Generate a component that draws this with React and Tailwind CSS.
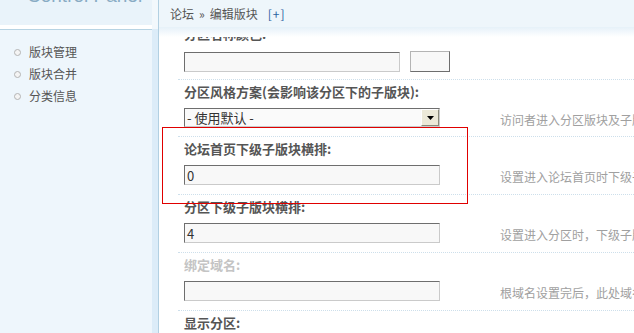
import React from "react";

const font = { fontFamily: '"Noto Sans CJK SC", "Noto Sans", sans-serif' };

function TextInput({ value = "", w = "w-[256px]" }) {
  return (
    <div
      className={`${w} shrink-0 h-[20px] border border-t-[#6e6e6e] border-l-[#6e6e6e] border-b-[#cacaca] border-r-[#cacaca] bg-[#f8f8f8] flex items-center pl-[2px] text-[13px] leading-none text-[#333]`}
    >
      {value}
    </div>
  );
}

function Row({ label, labelClass = "text-[#555]", children, desc }) {
  return (
    <div className="border-b border-dotted border-[#cddfeb] pl-[6px] pt-[4px] pb-[9px]">
      <div className={`h-[16px] leading-[16px] text-[13px] font-bold whitespace-nowrap ${labelClass}`}>{label}</div>
      <div className="mt-[8px] flex items-center">
        {children}
        {desc && (
          <div className="ml-[60px] shrink-0 whitespace-nowrap text-[12px] leading-none text-[#a0a0a0] mt-[4px]">{desc}</div>
        )}
      </div>
    </div>
  );
}

export default function App() {
  return (
    <div className="relative w-[634px] h-[333px] overflow-hidden bg-white flex" style={font}>
      {/* Sidebar */}
      <div className="w-[152px] shrink-0 flex flex-col bg-[#eef6fc]">
        <div className="h-[25px] bg-[#e9f3fa] overflow-hidden pl-[27px]">
          <div className="-mt-[14px] text-[19px] leading-[20px] text-[#88abc4] whitespace-nowrap" style={{ fontFamily: '"Liberation Sans", sans-serif' }}>
            Control Panel
          </div>
        </div>
        <div className="h-[4px] bg-white" />
        <div className="h-[1px] bg-[#b6d3e3]" />
        <div className="flex flex-col gap-[6px] pt-[14px] pl-[14px]">
          {["版块管理", "版块合并", "分类信息"].map((t) => (
            <div key={t} className="flex items-center h-[16px] text-[12px] text-[#555]">
              <span className="w-[7px] h-[7px] rounded-full border border-[#b4b4b4] bg-[#f4f4f4] mr-[8px]" />
              {t}
            </div>
          ))}
        </div>
      </div>
      {/* divider strip */}
      <div className="w-[6px] shrink-0 flex flex-col">
        <div className="h-[29px] bg-[#f2f8fc]" />
        <div className="flex-1 bg-[#dcecf8]" />
      </div>
      <div className="w-[1px] shrink-0 bg-[#b2d0e2]" />
      {/* Main */}
      <div className="flex-1 flex flex-col min-w-0 overflow-hidden">
        <div className="relative z-10 h-[28px] shrink-0 bg-[#eef6fb] border-b border-white flex items-center pl-[11px] text-[12px] text-[#555] whitespace-nowrap">
          <span>论坛</span>
          <span className="mx-[5px]">»</span>
          <span>编辑版块</span>
          <span className="ml-[10px] text-[#2a62a0] tracking-[1px]">[+]</span>
          <div className="absolute left-0 right-0 top-full h-[10px] bg-gradient-to-b from-[#e6f1f9] to-white" />
        </div>
        <div className="-mt-[7px] pl-[19px] text-[#555]">
          <div className="border-b border-dotted border-[#cddfeb] pl-[6px] pt-[5px] pb-[7px]">
            <div className="h-[16px] leading-[16px] text-[13px] font-bold text-[#555] flex items-center whitespace-nowrap">
              分区名称颜色:
              <span className="ml-[14px] w-[3px] h-[3px] bg-[#aab8e0]" />
            </div>
            <div className="mt-[9px] flex items-center">
              <TextInput w="w-[216px]" />
              <div className="ml-[10px] shrink-0 w-[40px] h-[21px] border border-t-[#b4b4b4] border-l-[#b4b4b4] border-b-[#6e6e6e] border-r-[#6e6e6e] bg-[#f8f8f8]" />
            </div>
          </div>
          <Row label="分区风格方案(会影响该分区下的子版块):" desc="访问者进入分区版块及子版块时所使用的风格方案">
            <div className="w-[256px] shrink-0 h-[19px] border border-t-[#6e6e6e] border-l-[#6e6e6e] border-b-[#cacaca] border-r-[#cacaca] bg-[#fafafa] flex items-center justify-between pl-[2px] text-[13px] leading-none text-[#333]">
              <span>- 使用默认 -</span>
              <span className="w-[18px] h-full bg-[#ece9d8] border border-t-[#fff] border-l-[#fff] border-b-[#8a8a7a] border-r-[#8a8a7a] flex items-center justify-center">
                <svg width="7" height="4" viewBox="0 0 7 4"><path d="M0 0H7L3.5 4Z" fill="#000" /></svg>
              </span>
            </div>
          </Row>
          <Row label="论坛首页下级子版块横排:" desc="设置进入论坛首页时下级子版块的横排数">
            <TextInput value="0" />
          </Row>
          <Row label="分区下级子版块横排:" desc="设置进入分区时，下级子版块的横排数">
            <TextInput value="4" />
          </Row>
          <Row label="绑定域名:" labelClass="text-[#c4c4c4]" desc="根域名设置完后，此处域名才可用">
            <TextInput />
          </Row>
          <div className="pl-[6px] pt-[4px]">
            <div className="h-[16px] leading-[16px] text-[13px] font-bold text-[#555]">显示分区:</div>
          </div>
        </div>
      </div>
      {/* red annotation box */}
      <div className="absolute left-[162px] top-[127px] w-[306px] h-[77px] border border-[#e00000] pointer-events-none" />
    </div>
  );
}
